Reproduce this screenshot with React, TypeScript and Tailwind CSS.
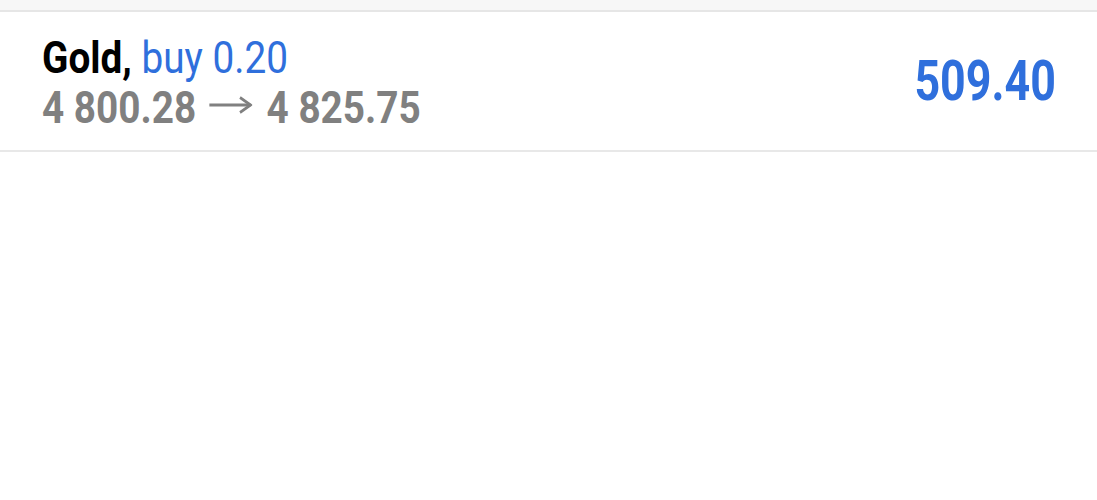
import React from "react";

export default function App() {
  return (
    <div className="w-[1097px] h-[500px] bg-white" style={{ fontFamily: "Roboto, 'Liberation Sans', sans-serif" }}>
      <div className="h-[10px] bg-[#f7f7f7]" />
      <div className="h-[2px] bg-[#e6e6e6]" />
      <div className="flex items-center justify-between h-[138px] pl-[42px] pr-[41px]">
        <div className="flex flex-col pt-[4px]">
          <div className="text-[44px] leading-[50px] origin-left scale-x-[0.88] whitespace-nowrap">
            <span className="font-bold text-black">Gold,</span>{" "}
            <span className="text-[#2f6fdc]">buy 0.20</span>
          </div>
          <div className="text-[44px] leading-[50px] origin-left scale-x-[0.88] whitespace-nowrap font-bold text-[#808080]">
            4 800.28
            <svg
              aria-label="→"
              className="inline-block align-[9px] ml-[15px] mr-[16px]"
              width="49"
              height="18"
              viewBox="0 0 49 18"
              fill="none"
              stroke="#808080"
              strokeWidth="3"
            >
              <line x1="0" y1="9" x2="47" y2="9" />
              <polyline points="35,1.5 47,9 35,16.5" strokeLinejoin="miter" />
            </svg>
            4 825.75
          </div>
        </div>
        <div className="text-[56px] leading-[60px] font-bold text-[#2f6fdc] origin-right scale-x-[0.8] whitespace-nowrap">
          509.40
        </div>
      </div>
      <div className="h-[2px] bg-[#e8e8e8]" />
    </div>
  );
}
